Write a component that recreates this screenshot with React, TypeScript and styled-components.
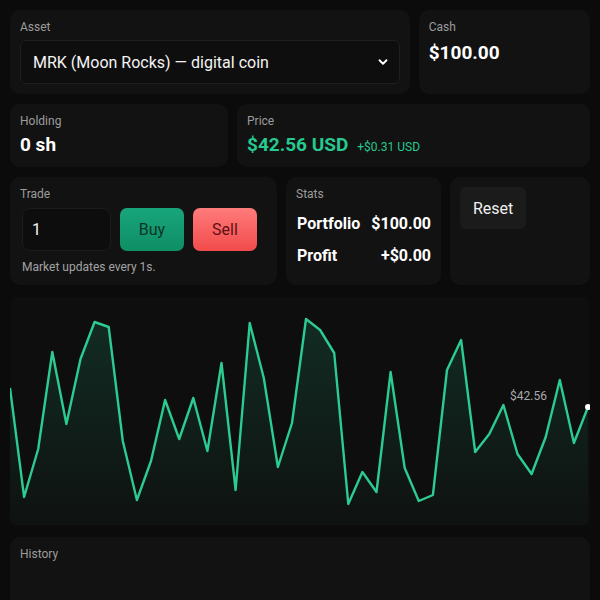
import React, { useState } from 'react';
import styled, { createGlobalStyle } from 'styled-components';
import { ChevronDown } from 'lucide-react';

const GlobalStyle = createGlobalStyle`
    html, body {
        overflow: hidden;
    }
    body {
        margin: 0;
        background: #0b0b0b;
        color: #f2f2f2;
        font-family: Roboto, 'Liberation Sans', sans-serif;
    }
`;

// chart points, y in px inside the plot (0 = top)
const points = [
    91, 200, 152, 55, 127, 62, 25, 30, 144, 203, 164, 103, 142, 101, 154, 66, 193, 26, 81, 170, 126,
    22, 33, 56, 207, 175, 195, 75, 171, 204, 198, 73, 43, 155, 137, 108, 157, 177, 140, 83, 146, 110,
];

const CHART_W = 580;
const CHART_H = 228;

const PriceChart = () => {
    const step = 578 / (points.length - 1);
    const coords = points.map((y, i) => [i * step, y]);
    const line = coords.map(([x, y], i) => `${i ? 'L' : 'M'}${x.toFixed(1)} ${y}`).join(' ');
    const area = `${line} L${coords[coords.length - 1][0].toFixed(1)} ${CHART_H} L0 ${CHART_H} Z`;
    const last = coords[coords.length - 1];
    return (
        <svg width={CHART_W} height={CHART_H} viewBox={`0 0 ${CHART_W} ${CHART_H}`}>
            <defs>
                <linearGradient id="fill" x1="0" y1="0" x2="0" y2="1">
                    <stop offset="0%" stopColor="#26c98f" stopOpacity="0.16" />
                    <stop offset="100%" stopColor="#26c98f" stopOpacity="0.02" />
                </linearGradient>
            </defs>
            <path d={area} fill="url(#fill)" />
            <path d={line} fill="none" stroke="#2bcb91" strokeWidth={2.4} strokeLinejoin="round" />
            <text x={537} y={103} fill="#a9a9a9" fontSize={12} textAnchor="end" fontFamily="Roboto, sans-serif">
                $42.56
            </text>
            <circle cx={last[0]} cy={last[1]} r={3} fill="#ffffff" />
        </svg>
    );
};

const App = () => {
    const [qty, setQty] = useState('1');
    return (
        <Page>
            <GlobalStyle />
            <Row cols="7fr 3fr">
                <Card>
                    <Label>Asset</Label>
                    <SelectWrap>
                        <Select defaultValue="MRK">
                            <option value="MRK">MRK (Moon Rocks) — digital coin</option>
                        </Select>
                        <Chevron>
                            <ChevronDown size={14} strokeWidth={3.2} />
                        </Chevron>
                    </SelectWrap>
                </Card>
                <Card>
                    <Label>Cash</Label>
                    <Value gap={6}>$100.00</Value>
                </Card>
            </Row>

            <Row cols="218px 1fr">
                <Card>
                    <Label>Holding</Label>
                    <Value>0 sh</Value>
                </Card>
                <Card>
                    <Label>Price</Label>
                    <PriceLine>
                        <Value green>$42.56 USD</Value>
                        <Change>+$0.31 USD</Change>
                    </PriceLine>
                </Card>
            </Row>

            <Row cols="267px 155px 1fr">
                <Card>
                    <Label>Trade</Label>
                    <TradeRow>
                        <QtyInput value={qty} onChange={(e) => setQty(e.target.value)} />
                        <TradeButton kind="buy">Buy</TradeButton>
                        <TradeButton kind="sell">Sell</TradeButton>
                    </TradeRow>
                    <Note>Market updates every 1s.</Note>
                </Card>
                <Card>
                    <Label>Stats</Label>
                    <StatRow>
                        <span>Portfolio</span>
                        <span>$100.00</span>
                    </StatRow>
                    <StatRow>
                        <span>Profit</span>
                        <span>+$0.00</span>
                    </StatRow>
                </Card>
                <Card>
                    <ResetButton>Reset</ResetButton>
                </Card>
            </Row>

            <ChartCard>
                <PriceChart />
            </ChartCard>

            <HistoryCard>
                <Label>History</Label>
            </HistoryCard>
        </Page>
    );
};

const Page = styled.div`
    padding: 10px;
    display: flex;
    flex-direction: column;
    gap: 10px;
`;

const Row = styled.div<{ cols: string }>`
    display: grid;
    grid-template-columns: ${(p) => p.cols};
    gap: 9px;
`;

const Card = styled.div`
    background: #121212;
    border-radius: 10px;
    padding: 9px 10px 10px;
    display: flex;
    flex-direction: column;
`;

const Label = styled.div`
    font-size: 12px;
    line-height: 16px;
    color: #9c9c9c;
`;

const Value = styled.div<{ green?: boolean; gap?: number }>`
    font-size: 19px;
    line-height: 24px;
    font-weight: 700;
    color: ${(p) => (p.green ? '#26c98f' : '#ffffff')};
    margin-top: ${(p) => p.gap ?? 4}px;
`;

const PriceLine = styled.div`
    display: flex;
    align-items: baseline;
    gap: 9px;
`;

const Change = styled.span`
    font-size: 12px;
    color: #26c98f;
`;

const SelectWrap = styled.div`
    position: relative;
    margin-top: 5px;
    height: 44px;
`;

const Select = styled.select`
    appearance: none;
    display: block;
    width: 100%;
    height: 44px;
    background: #0e0e0e;
    border: 1px solid #1f1f1f;
    border-radius: 6px;
    color: #f4f4f4;
    font-family: Roboto, 'Liberation Sans', sans-serif;
    font-size: 16px;
    padding: 0 12px;
    outline: none;
`;

const Chevron = styled.span`
    position: absolute;
    right: 10px;
    top: 15px;
    color: #ffffff;
    display: flex;
    pointer-events: none;
`;

const TradeRow = styled.div`
    display: flex;
    gap: 9px;
    margin-top: 6px;
    padding-left: 2px;
`;

const QtyInput = styled.input`
    width: 89px;
    height: 43px;
    box-sizing: border-box;
    background: #0d0d0d;
    border: 1px solid #1c1c1c;
    border-radius: 8px;
    color: #f4f4f4;
    font-family: Roboto, 'Liberation Sans', sans-serif;
    font-size: 16px;
    padding: 0 9px;
    outline: none;
`;

const TradeButton = styled.button<{ kind: 'buy' | 'sell' }>`
    width: 64px;
    height: 43px;
    border: none;
    border-radius: 7px;
    font-family: Roboto, 'Liberation Sans', sans-serif;
    font-size: 16px;
    background: ${(p) =>
        p.kind === 'buy'
            ? 'linear-gradient(#18a57b, #0f8e65)'
            : 'linear-gradient(#ff7b7b, #f24b4b)'};
    color: ${(p) => (p.kind === 'buy' ? '#0b3527' : '#5e0f14')};
    cursor: pointer;
`;

const Note = styled.div`
    font-size: 12px;
    line-height: 16px;
    color: #a3a3a3;
    margin-top: 8px;
    padding-left: 2px;
`;

const StatRow = styled.div`
    display: flex;
    justify-content: space-between;
    font-size: 16px;
    line-height: 20px;
    font-weight: 700;
    color: #ffffff;
    margin-top: 12px;
    padding-left: 1px;
`;

const ResetButton = styled.button`
    align-self: flex-start;
    height: 42px;
    padding: 0 13px;
    margin-top: 1px;
    border: none;
    border-radius: 6px;
    background: #1b1b1b;
    color: #f0f0f0;
    font-family: Roboto, 'Liberation Sans', sans-serif;
    font-size: 16px;
`;

const ChartCard = styled.div`
    flex: 0 0 ${CHART_H}px;
    background: #0e0e0e;
    border-radius: 6px;
    margin: 2px 0 2px;
    overflow: hidden;
    display: flex;
`;

const HistoryCard = styled(Card)`
    flex: 0 0 80px;
`;

export default App;
